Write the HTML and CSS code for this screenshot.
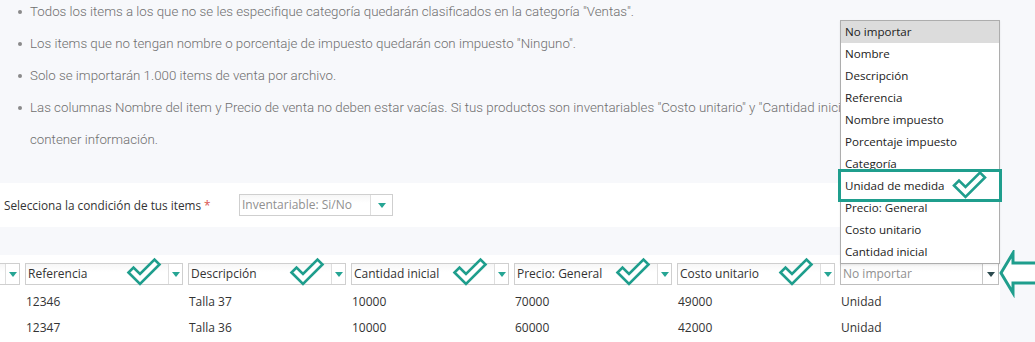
FILE: index.html
```html
<!DOCTYPE html>
<html lang="es">
<head>
<meta charset="utf-8">
<title>Importar items</title>
<link rel="stylesheet" href="styles.css">
</head>
<body>
<div class="page">
  <ul class="notes">
    <li>Todos los items a los que no se les especifique categoría quedarán clasificados en la categoría "Ventas".</li>
    <li>Los items que no tengan nombre o porcentaje de impuesto quedarán con impuesto "Ninguno".</li>
    <li>Solo se importarán 1.000 items de venta por archivo.</li>
    <li>Las columnas Nombre del item y Precio de venta no deben estar vacías. Si tus productos son inventariables "Costo unitario" y "Cantidad inicial" deben<br>contener información.</li>
  </ul>

  <div class="panel">
    <div class="condition">
      <span class="label">Selecciona la condición de tus items<span class="req">*</span></span>
      <div class="select wide">
        <span class="value muted">Inventariable: Si/No</span>
        <span class="arrow"></span>
      </div>
    </div>
    <div class="spacer"></div>
    <div class="table">
      <div class="row head">
        <div class="select"><span class="value"></span><span class="arrow"></span></div>
        <div class="select"><span class="value">Referencia</span><span class="arrow"></span><svg class="check" viewBox="-1 0 36 30"><polygon points="1.5,15.5 13,27 32.5,7.5 27.5,2.5 13,17 6.5,10.5"/></svg></div>
        <div class="select"><span class="value">Descripción</span><span class="arrow"></span><svg class="check" viewBox="-1 0 36 30"><polygon points="1.5,15.5 13,27 32.5,7.5 27.5,2.5 13,17 6.5,10.5"/></svg></div>
        <div class="select"><span class="value">Cantidad inicial</span><span class="arrow"></span><svg class="check" viewBox="-1 0 36 30"><polygon points="1.5,15.5 13,27 32.5,7.5 27.5,2.5 13,17 6.5,10.5"/></svg></div>
        <div class="select"><span class="value">Precio: General</span><span class="arrow"></span><svg class="check" viewBox="-1 0 36 30"><polygon points="1.5,15.5 13,27 32.5,7.5 27.5,2.5 13,17 6.5,10.5"/></svg></div>
        <div class="select"><span class="value">Costo unitario</span><span class="arrow"></span><svg class="check" viewBox="-1 0 36 30"><polygon points="1.5,15.5 13,27 32.5,7.5 27.5,2.5 13,17 6.5,10.5"/></svg></div>
        <div class="select focus"><span class="value muted">No importar</span><span class="arrow dark"></span></div>
      </div>
      <div class="row data">
        <div class="cell"></div>
        <div class="cell">12346</div>
        <div class="cell">Talla 37</div>
        <div class="cell">10000</div>
        <div class="cell">70000</div>
        <div class="cell">49000</div>
        <div class="cell">Unidad</div>
      </div>
      <div class="row data">
        <div class="cell"></div>
        <div class="cell">12347</div>
        <div class="cell">Talla 36</div>
        <div class="cell">10000</div>
        <div class="cell">60000</div>
        <div class="cell">42000</div>
        <div class="cell">Unidad</div>
      </div>
    </div>
  </div>

  <ul class="menu">
    <li class="active">No importar</li>
    <li>Nombre</li>
    <li>Descripción</li>
    <li>Referencia</li>
    <li>Nombre impuesto</li>
    <li>Porcentaje impuesto</li>
    <li>Categoría</li>
    <li>Unidad de medida</li>
    <li>Precio: General</li>
    <li>Costo unitario</li>
    <li>Cantidad inicial</li>
  </ul>

  <div class="highlight"></div>
  <svg class="check menu-check" viewBox="-1 0 36 30"><polygon points="1.5,15.5 13,27 32.5,7.5 27.5,2.5 13,17 6.5,10.5"/></svg>

  <svg class="pointer" viewBox="0 0 40 48"><polygon points="3,23 15,3 15,13 42,13 42,33 15,33 15,43"/></svg>
</div>
</body>
</html>
```
FILE: styles.css
```css
* { box-sizing: border-box; }

html, body {
  margin: 0;
  padding: 0;
}

body {
  background: #f7f8fb;
  width: 1035px;
  height: 342px;
  overflow: hidden;
}

.page {
  position: relative;
  width: 1035px;
  height: 342px;
  overflow: hidden;
}

.notes {
  list-style: none;
  margin: -4px 0 27px 0;
  padding: 0 0 0 30px;
  font-family: Roboto, "Liberation Sans", sans-serif;
  font-weight: 300;
  font-size: 13.3px;
  line-height: 32px;
  color: #6f6f6f;
  white-space: nowrap;
}

.notes li::before {
  content: "";
  display: inline-block;
  width: 4px;
  height: 4px;
  border-radius: 50%;
  background: #8a8a8a;
  margin-left: -12px;
  margin-right: 8px;
  vertical-align: middle;
}

.panel {
  width: 1000px;
  font-family: "Open Sans", "Noto Sans", sans-serif;
  font-size: 12px;
  color: #333;
}

.condition {
  background: #fff;
  height: 44px;
  display: flex;
  align-items: center;
  padding-left: 4px;
}

.label {
  width: 235px;
  color: #333;
  font-size: 11.8px;
}

.req {
  color: #d9534f;
  margin-left: 3px;
}

.spacer {
  height: 28px;
}

.table {
  background: #fff;
  padding-top: 8px;
  overflow: hidden;
  height: 87px;
}

.row {
  display: flex;
  gap: 5px;
  margin-left: -138px;
}

.row.head {
  margin-bottom: 4px;
}

.select {
  position: relative;
  width: 158px;
  height: 22px;
  flex: none;
  display: flex;
  border: 1px solid #cfcfcf;
  background: linear-gradient(#f6f6f6, #fff 40%);
}

.select.wide {
  width: 154px;
}

.select.focus {
  width: 159px;
  border-color: #bdbdbd;
}

.value {
  flex: 1;
  padding-left: 2px;
  line-height: 20px;
  white-space: nowrap;
  overflow: hidden;
  color: #333;
}

.value.muted {
  color: #909090;
}

.arrow {
  width: 14px;
  flex: none;
  border-left: 1px solid #dedede;
  display: flex;
  align-items: center;
  justify-content: center;
  background: #fff;
}

.select.wide .arrow {
  width: 22px;
}

.select.focus .arrow {
  width: 16px;
  border-left-color: #c8c8c8;
}

.arrow::after {
  content: "";
  border-left: 4px solid transparent;
  border-right: 4px solid transparent;
  border-top: 5px solid #26a594;
}

.arrow.dark::after {
  border-top-color: #2c4a4f;
}

.cell {
  width: 158px;
  flex: none;
  height: 26px;
  line-height: 26px;
  padding-left: 1px;
  color: #333;
}

.check {
  position: absolute;
  width: 36px;
  height: 30px;
  left: 100px;
  top: -7px;
}

.check polygon {
  fill: #fff;
  stroke: #1f9e8d;
  stroke-width: 2.6;
  stroke-linejoin: miter;
}

.menu {
  position: absolute;
  left: 840px;
  top: 20px;
  width: 160px;
  margin: 0;
  padding: 0;
  list-style: none;
  background: #fff;
  border: 1px solid #adadad;
  font-family: "Open Sans", "Noto Sans", sans-serif;
  font-size: 11.6px;
  color: #222;
  box-shadow: 0 1px 2px rgba(0, 0, 0, 0.08);
}

.menu li {
  height: 22px;
  line-height: 22px;
  padding-left: 4px;
}

.menu li.active {
  background: #dcdcdc;
}

.highlight {
  position: absolute;
  left: 838px;
  top: 169px;
  width: 164px;
  height: 33px;
  border: 3px solid #1f9e8d;
}

.menu-check {
  left: 951px;
  top: 170px;
  width: 37px;
  height: 30px;
}

.pointer {
  position: absolute;
  left: 998px;
  top: 250px;
  width: 40px;
  height: 48px;
}

.pointer polygon {
  fill: #fff;
  stroke: #1f9e8d;
  stroke-width: 3;
}
```
